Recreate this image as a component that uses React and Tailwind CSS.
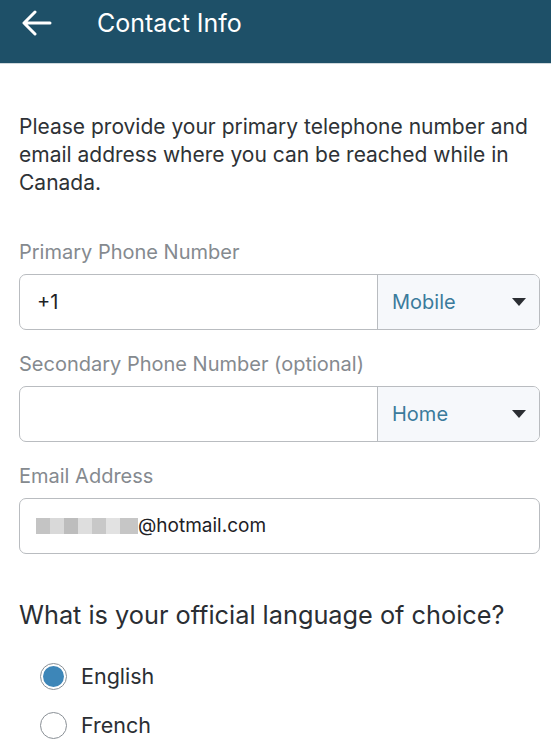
import { useState } from "react";

function PhoneField({ label, value, type }) {
  return (
    <div className="flex flex-col">
      <div className="text-[20px] leading-[26px] text-[#858a8f] mb-[9px]">{label}</div>
      <div className="flex h-[56px] border border-[#b9bcc0] rounded-[7px] overflow-hidden">
        <div className="flex-1 flex items-center pl-[17px] text-[20px] text-[#1d2125]">{value}</div>
        <div className="w-[162px] flex items-center justify-between pl-[14px] pr-[13px] bg-[#f6f8fb] border-l border-[#b9bcc0]">
          <span className="text-[20px] text-[#3b7b9c]">{type}</span>
          <span className="w-0 h-0 border-l-[7px] border-r-[7px] border-t-[8px] border-l-transparent border-r-transparent border-t-[#2b2e33]" />
        </div>
      </div>
    </div>
  );
}

export default function App() {
  const [lang, setLang] = useState("en");

  return (
    <div className="w-[551px] h-[751px] bg-white overflow-hidden font-['Inter',sans-serif]">
      {/* header */}
      <div className="h-[64px] bg-[#1e5068] flex items-start pt-[8px] border-b border-[#cfd8dc]">
        <svg className="ml-[22px] mt-[2px]" width="30" height="26" viewBox="0 0 30 26" fill="none">
          <path d="M28 13H3M13 2L2 13l11 11" stroke="white" strokeWidth="3" strokeLinecap="round" strokeLinejoin="round" />
        </svg>
        <h1 className="ml-[45px] text-[25px] leading-[30px] text-white font-normal">Contact Info</h1>
      </div>

      <div className="pl-[19px] pr-[11px] flex flex-col">
        <p className="mt-[49px] -mr-[6px] text-[21px] leading-[28px] text-[#2e3236]">
          Please provide your primary telephone number and email address where you can be reached while in Canada.
        </p>

        <div className="mt-[42px] flex flex-col gap-[21px]">
          <PhoneField label="Primary Phone Number" value="+1" type="Mobile" />
          <PhoneField label="Secondary Phone Number (optional)" value="" type="Home" />

          <div className="flex flex-col">
            <div className="text-[20px] leading-[26px] text-[#858a8f] mb-[9px]">Email Address</div>
            <div className="flex items-center h-[56px] border border-[#b9bcc0] rounded-[7px] pl-[16px] text-[19px] text-[#1d2125]">
              <span className="flex items-center">
                <span className="w-[14px] h-[16px] bg-[#c4c4c4]" />
                <span className="w-[14px] h-[16px] bg-[#d9d9d9]" />
                <span className="w-[14px] h-[16px] bg-[#bdbdbd]" />
                <span className="w-[14px] h-[16px] bg-[#dedede]" />
                <span className="w-[14px] h-[16px] bg-[#c8c8c8]" />
                <span className="w-[14px] h-[16px] bg-[#e2e2e2]" />
                <span className="w-[18px] h-[16px] bg-[#c6c6c6]" />
              </span>
              @hotmail.com
            </div>
          </div>
        </div>

        <h2 className="mt-[46px] text-[25.3px] leading-[30px] text-[#2a2e33] font-normal whitespace-nowrap">
          What is your official language of choice?
        </h2>

        <div className="mt-[33px] pl-[21px] flex flex-col gap-[22px]">
          {[
            ["en", "English"],
            ["fr", "French"],
          ].map(([k, t]) => (
            <button key={k} onClick={() => setLang(k)} className="flex items-center gap-[14px] text-left">
              <span className="w-[27px] h-[27px] rounded-full border border-[#8a9096] flex items-center justify-center bg-white">
                {lang === k && <span className="w-[21px] h-[21px] rounded-full bg-[#3d86b8]" />}
              </span>
              <span className="text-[21.5px] leading-[27px] text-[#2a2e33]">{t}</span>
            </button>
          ))}
        </div>
      </div>
    </div>
  );
}
